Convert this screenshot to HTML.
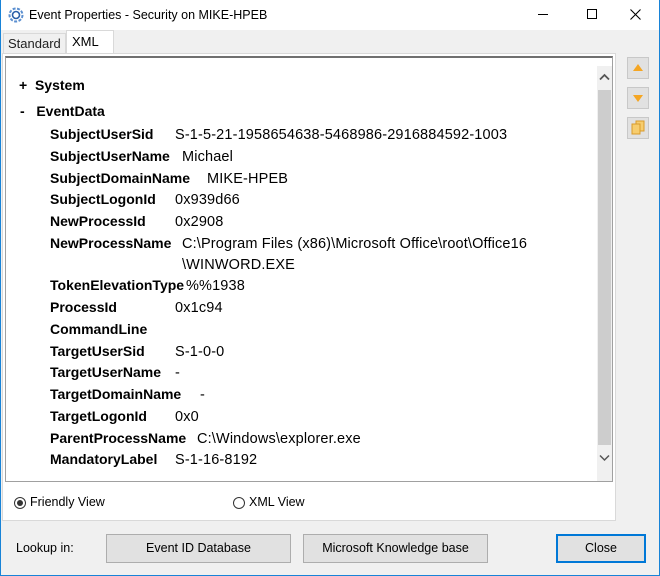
<!DOCTYPE html>
<html><head><style>
body{margin:0;width:660px;height:576px;position:relative;overflow:hidden;background:#f0f0f0;font-family:"Liberation Sans",sans-serif;color:#000}
.a{position:absolute;white-space:nowrap}
.b{font-weight:bold;font-size:14px}
.v{font-size:14.5px;letter-spacing:0.15px;margin-top:-0.5px}
.btn{position:absolute;background:#e1e1e1;border:1px solid #adadad;font-size:12.5px;text-align:center;box-sizing:border-box}
.rb{position:absolute;width:22px;height:22px;background:#e1e1e1;border:1px solid #c8c8c8;box-sizing:border-box}
</style></head><body>
<div class="a" style="left:0;top:0;width:660px;height:30px;background:#fff"></div>
<div class="a" style="left:0;top:0;width:1px;height:576px;background:#1883d7"></div>
<div class="a" style="left:659px;top:0;width:1px;height:576px;background:#1883d7"></div>
<div class="a" style="left:0;top:575px;width:660px;height:1px;background:#1883d7"></div>
<svg class="a" style="left:8px;top:7px" width="16" height="16" viewBox="0 0 16 16"><circle cx="8" cy="8" r="6.5" fill="none" stroke="#5b8fd0" stroke-width="2" stroke-dasharray="3 1.5"/><circle cx="8" cy="8" r="3.5" fill="none" stroke="#2a5fa8" stroke-width="1.6"/></svg>
<div class="a" style="left:29px;top:8px;font-size:12.5px">Event Properties - Security on MIKE-HPEB</div>
<div class="a" style="left:538px;top:14px;width:10px;height:1px;background:#000"></div>
<div class="a" style="left:587px;top:9px;width:10px;height:10px;border:1px solid #000;box-sizing:border-box"></div>
<svg class="a" style="left:630px;top:9px" width="11" height="11"><path d="M0.5 0.5L10.5 10.5M10.5 0.5L0.5 10.5" stroke="#000" stroke-width="1.1"/></svg>
<div class="a" style="left:3px;top:33px;width:63px;height:20px;border:1px solid #d9d9d9;border-bottom:none;font-size:13px;padding-left:4px;line-height:20px;box-sizing:border-box;color:#222">Standard</div>
<div class="a" style="left:66px;top:30px;width:48px;height:24px;background:#fff;border:1px solid #d9d9d9;border-bottom:none;box-sizing:border-box;font-size:13px;padding-left:5px;line-height:22px">XML</div>
<div class="a" style="left:2px;top:53px;width:614px;height:468px;background:#fff;border:1px solid #d9d9d9;box-sizing:border-box"></div>
<div class="a" style="left:5px;top:56px;width:608px;height:426px;border:1px solid #a0a0a0;border-top:2px solid #707070;box-sizing:border-box"></div>
<div class="a" style="left:597px;top:66px;width:15px;height:415px;background:#f0f0f0"></div>
<div class="a" style="left:598px;top:90px;width:13px;height:355px;background:#cdcdcd"></div>
<svg class="a" style="left:599px;top:73px" width="11" height="8"><path d="M1 6.5L5.5 2L10 6.5" fill="none" stroke="#555" stroke-width="1.8"/></svg>
<svg class="a" style="left:599px;top:454px" width="11" height="8"><path d="M1 1.5L5.5 6L10 1.5" fill="none" stroke="#555" stroke-width="1.5"/></svg>
<div class="a b" style="left:19px;top:77px">+&nbsp;&nbsp;System</div>
<div class="a b" style="left:20px;top:103px">-&nbsp;&nbsp;&nbsp;EventData</div>
<div class="a b" style="left:50px;top:126px">SubjectUserSid</div><div class="a v" style="left:175px;top:127px">S-1-5-21-1958654638-5468986-2916884592-1003</div>
<div class="a b" style="left:50px;top:148px">SubjectUserName</div><div class="a v" style="left:182px;top:149px">Michael</div>
<div class="a b" style="left:50px;top:170px">SubjectDomainName</div><div class="a v" style="left:207px;top:171px">MIKE-HPEB</div>
<div class="a b" style="left:50px;top:191px">SubjectLogonId</div><div class="a v" style="left:175px;top:192px">0x939d66</div>
<div class="a b" style="left:50px;top:213px">NewProcessId</div><div class="a v" style="left:175px;top:214px">0x2908</div>
<div class="a b" style="left:50px;top:235px">NewProcessName</div><div class="a v" style="left:182px;top:236px">C:\Program Files (x86)\Microsoft Office\root\Office16</div>
<div class="a v" style="left:182px;top:257px">\WINWORD.EXE</div>
<div class="a b" style="left:50px;top:277px">TokenElevationType</div><div class="a v" style="left:186px;top:278px">%%1938</div>
<div class="a b" style="left:50px;top:299px">ProcessId</div><div class="a v" style="left:175px;top:300px">0x1c94</div>
<div class="a b" style="left:50px;top:321px">CommandLine</div>
<div class="a b" style="left:50px;top:343px">TargetUserSid</div><div class="a v" style="left:175px;top:344px">S-1-0-0</div>
<div class="a b" style="left:50px;top:364px">TargetUserName</div><div class="a v" style="left:175px;top:365px">-</div>
<div class="a b" style="left:50px;top:386px">TargetDomainName</div><div class="a v" style="left:200px;top:387px">-</div>
<div class="a b" style="left:50px;top:408px">TargetLogonId</div><div class="a v" style="left:175px;top:409px">0x0</div>
<div class="a b" style="left:50px;top:430px">ParentProcessName</div><div class="a v" style="left:197px;top:431px">C:\Windows\explorer.exe</div>
<div class="a b" style="left:50px;top:451px">MandatoryLabel</div><div class="a v" style="left:175px;top:452px">S-1-16-8192</div>
<div class="a" style="left:14px;top:497px;width:12px;height:12px;border:1px solid #333;border-radius:50%;box-sizing:border-box"></div>
<div class="a" style="left:17px;top:500px;width:6px;height:6px;background:#333;border-radius:50%"></div>
<div class="a" style="left:30px;top:495px;font-size:12.5px">Friendly View</div>
<div class="a" style="left:233px;top:497px;width:12px;height:12px;border:1px solid #333;border-radius:50%;box-sizing:border-box"></div>
<div class="a" style="left:249px;top:495px;font-size:12.5px">XML View</div>
<div class="rb" style="left:627px;top:57px"></div><svg class="a" style="left:632px;top:63px" width="12" height="9"><polygon points="6,1 11,8 1,8" fill="#f5a623"/></svg>
<div class="rb" style="left:627px;top:87px"></div><svg class="a" style="left:632px;top:94px" width="12" height="9"><polygon points="1,1 11,1 6,8" fill="#f5a623"/></svg>
<div class="rb" style="left:627px;top:117px"></div><svg class="a" style="left:631px;top:120px" width="14" height="16"><rect x="5" y="1" width="8" height="10" fill="#f7cd6e" stroke="#d99a2b"/><rect x="1" y="4" width="8" height="10" fill="#f7cd6e" stroke="#d99a2b"/></svg>
<div class="a" style="left:16px;top:541px;font-size:12.5px">Lookup in:</div>
<div class="btn" style="left:106px;top:534px;width:185px;height:29px;line-height:27px">Event ID Database</div>
<div class="btn" style="left:303px;top:534px;width:185px;height:29px;line-height:27px">Microsoft Knowledge base</div>
<div class="btn" style="left:556px;top:534px;width:90px;height:29px;line-height:25px;border:2px solid #0078d7">Close</div>
</body></html>
